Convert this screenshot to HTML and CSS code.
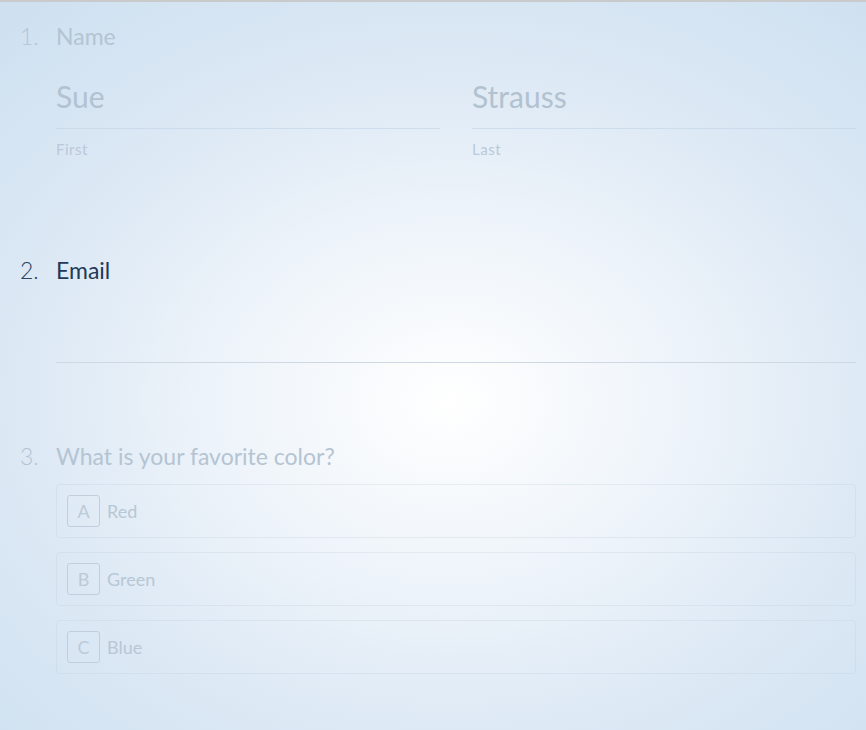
FILE: index.html
```html
<!DOCTYPE html>
<html lang="en">
<head>
<meta charset="utf-8">
<title>Form</title>
<link rel="stylesheet" href="styles.css">
</head>
<body>
<div class="page">
  <section class="question question--name faded">
    <div class="q-head"><span class="q-num">1.</span><span class="q-title">Name</span></div>
    <div class="q-body name-grid">
      <div class="field">
        <div class="field-value">Sue</div>
        <div class="field-label">First</div>
      </div>
      <div class="field">
        <div class="field-value">Strauss</div>
        <div class="field-label">Last</div>
      </div>
    </div>
  </section>

  <section class="question question--email active">
    <div class="q-head"><span class="q-num">2.</span><span class="q-title">Email</span></div>
    <div class="q-body">
      <div class="field field--email">
        <div class="field-value"></div>
      </div>
    </div>
  </section>

  <section class="question question--last faded">
    <div class="q-head"><span class="q-num">3.</span><span class="q-title">What is your favorite color?</span></div>
    <div class="q-body options">
      <div class="option"><span class="key">A</span><span class="opt-text">Red</span></div>
      <div class="option"><span class="key">B</span><span class="opt-text">Green</span></div>
      <div class="option"><span class="key">C</span><span class="opt-text">Blue</span></div>
    </div>
  </section>
</div>
</body>
</html>
```

FILE: styles.css
```css
html, body {
  margin: 0;
  padding: 0;
  height: 100%;
}
body {
  font-family: Lato, "Open Sans", "Liberation Sans", sans-serif;
  background: radial-gradient(ellipse 75% 70% at 52% 55%, #ffffff 0%, #eef4fa 35%, #dde9f5 65%, #cfe1f1 100%);
  border-top: 2px solid #c9cacc;
  box-sizing: border-box;
  overflow: hidden;
}
.page {
  padding: 20px 10px 0 20px;
}
.question {
  margin-bottom: 97px;
}
.question--email {
  margin-bottom: 79px;
}
.question--last {
  margin-bottom: 0;
}
.q-head {
  display: flex;
  font-size: 23px;
  line-height: 28px;
}
.q-num {
  width: 36px;
  font-weight: 300;
}
.q-body {
  margin-left: 36px;
}
.faded .q-head { color: #b5c4d2; }
.active .q-head { color: #1e3a57; }
.active .q-num { color: #2d4560; }

.name-grid {
  display: grid;
  grid-template-columns: 1fr 1fr;
  column-gap: 32px;
  margin-top: 26px;
}
.field-value {
  font-size: 30px;
  line-height: 40px;
  height: 40px;
  padding-bottom: 12px;
  border-bottom: 1px solid rgba(185, 205, 225, 0.45);
  color: #b2c2d0;
}
.field-label {
  margin-top: 10px;
  font-size: 15px;
  letter-spacing: 0.5px;
  line-height: 20px;
  color: #bac9d7;
}
.field--email {
  margin-top: 26px;
}
.field--email .field-value {
  border-bottom-color: #cdd8e2;
}

.options {
  margin-top: 14px;
  display: flex;
  flex-direction: column;
  gap: 14px;
}
.option {
  display: flex;
  align-items: center;
  padding: 10px;
  border: 1px solid rgba(190, 205, 220, 0.3);
  border-radius: 4px;
}
.key {
  width: 33px;
  height: 32px;
  box-sizing: border-box;
  border: 1px solid #c2cedb;
  border-radius: 3px;
  display: flex;
  align-items: center;
  justify-content: center;
  font-size: 18px;
  color: #bccad8;
}
.opt-text {
  margin-left: 7px;
  font-size: 18px;
  color: #b8c7d5;
}
```
